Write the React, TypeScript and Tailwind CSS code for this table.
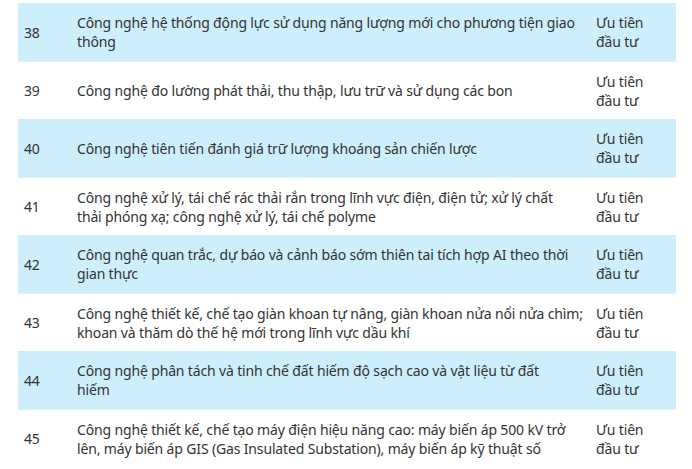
import React from "react";

const rows: [string, string[], boolean][] = [
  ["38", ["Công nghệ hệ thống động lực sử dụng năng lượng mới cho phương tiện giao", "thông"], true],
  ["39", ["Công nghệ đo lường phát thải, thu thập, lưu trữ và sử dụng các bon"], false],
  ["40", ["Công nghệ tiên tiến đánh giá trữ lượng khoáng sản chiến lược"], true],
  ["41", ["Công nghệ xử lý, tái chế rác thải rắn trong lĩnh vực điện, điện tử; xử lý chất", "thải phóng xạ; công nghệ xử lý, tái chế polyme"], false],
  ["42", ["Công nghệ quan trắc, dự báo và cảnh báo sớm thiên tai tích hợp AI theo thời", "gian thực"], true],
  ["43", ["Công nghệ thiết kế, chế tạo giàn khoan tự nâng, giàn khoan nửa nổi nửa chìm;", "khoan và thăm dò thế hệ mới trong lĩnh vực dầu khí"], false],
  ["44", ["Công nghệ phân tách và tinh chế đất hiếm độ sạch cao và vật liệu từ đất", "hiếm"], true],
  ["45", ["Công nghệ thiết kế, chế tạo máy điện hiệu năng cao: máy biến áp 500 kV trở", "lên, máy biến áp GIS (Gas Insulated Substation), máy biến áp kỹ thuật số"], false],
];

export default function App() {
  return (
    <div className="w-[692px] h-[469px] bg-white overflow-hidden pt-[3px] pl-[18px] text-[#333] text-[14px] leading-[19px] tracking-[-0.15px]" style={{ fontFamily: '"Noto Sans", sans-serif' }}>
      <div className="w-[658px] flex flex-col">
        {rows.map(([n, lines, blue]) => (
          <div key={n} className={`flex h-[58px] items-center ${blue ? "bg-[#cdeefb]" : "bg-white border-t border-[#e6eef2]"}`}>
            <div className="w-[59px] pl-[6px]">{n}</div>
            <div className="w-[513px] pr-[6px] whitespace-nowrap">
              {lines.map((l, i) => (
                <div key={i}>{l}</div>
              ))}
            </div>
            <div className="flex-1 pl-[6px]">Ưu tiên<br />đầu tư</div>
          </div>
        ))}
      </div>
    </div>
  );
}
